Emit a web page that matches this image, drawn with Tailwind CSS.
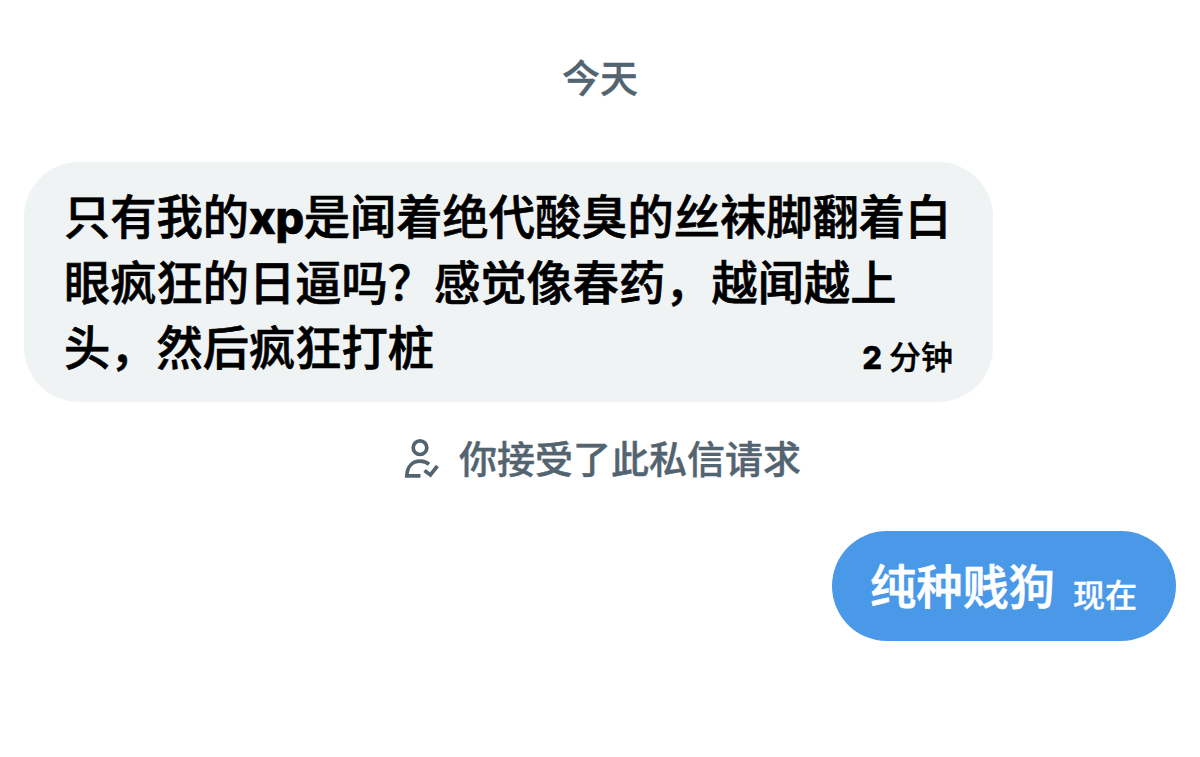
<!DOCTYPE html>
<html lang="zh-CN">
<head>
    <meta charset="UTF-8">
    <meta name="viewport" content="width=device-width, initial-scale=1.0">
    <title>私信</title>
    <script src="https://cdn.jsdelivr.net/npm/@tailwindcss/browser@4"></script>
</head>
<body class="bg-white min-h-screen overflow-hidden font-[family-name:'Noto_Sans_CJK_SC',sans-serif] font-medium">

    <main class="flex flex-col px-6">
        <!-- 日期 -->
        <div class="mt-[49px] text-center text-[38px] leading-[54px] text-[#536471] [-webkit-text-stroke:0.4px]">今天</div>

        <!-- 收到的消息 -->
        <div class="mt-[59px] w-[969px] h-[240px] rounded-[55px] bg-[#eff3f4] px-10 pt-[19px] flex text-black relative">
            <p class="text-[46.25px] leading-[65.5px] whitespace-nowrap [-webkit-text-stroke:0.7px]">只有我的<span class="font-[family-name:Inter] font-extrabold text-[45px] leading-none tracking-[-0.3px]">xp</span>是闻着绝代酸臭的丝袜脚翻着白<br>眼疯狂的日逼吗？感觉像春药，越闻越上<br>头，然后疯狂打桩</p>
            <span class="absolute right-10 bottom-6 text-[32px] leading-[46px] whitespace-nowrap [-webkit-text-stroke:0.4px]"><span class="font-[family-name:Inter] font-extrabold text-[31px] leading-none mr-[7px]">2</span>分钟</span>
        </div>

        <!-- 请求状态 -->
        <div class="mt-[28px] ml-1 flex justify-center items-center gap-[18px] text-[#536471]">
            <svg class="w-[38px] h-[42px]" viewBox="0 0 38 42" fill="none" stroke="currentColor" stroke-width="3.7">
                <circle cx="17" cy="11.7" r="6.8"/>
                <path d="M26 28.3C23.7 26.2 20.7 25.2 17.3 25.2C9.5 25.2 4.2 30.3 3.8 39.8H17.5"/>
                <path d="M21.5 34.5L27.4 39L34.4 30"/>
            </svg>
            <span class="text-[38px] leading-[54px] [-webkit-text-stroke:0.4px]">你接受了此私信请求</span>
        </div>

        <!-- 发出的消息 -->
        <div class="mt-[47px] self-end w-[344px] h-[110px] rounded-[55px] bg-[#4a99e9] pl-[38px] pt-[20px] flex text-white">
            <p class="text-[46.25px] leading-[65.5px] [-webkit-text-stroke:0.7px]">纯种贱狗</p>
            <span class="ml-[18px] mt-[19px] text-[32px] leading-[46px] [-webkit-text-stroke:0.4px]">现在</span>
        </div>
    </main>

</body>
</html>
